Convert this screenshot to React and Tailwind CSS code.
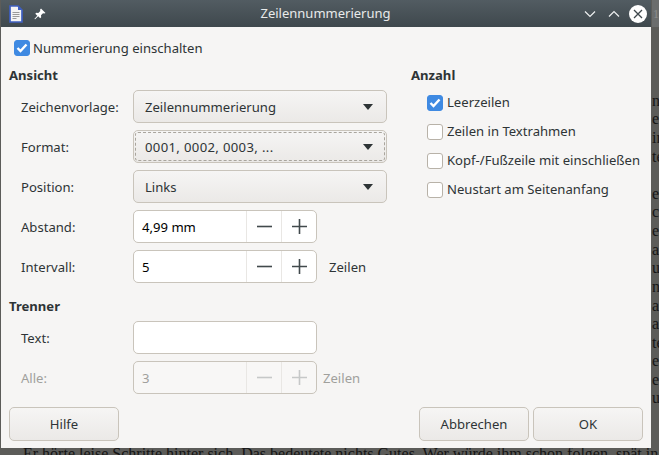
import React from 'react';

const FONT = "font-['Noto_Sans',sans-serif]";

const DOC_LINES = [
    ['n', 92], ['et', 110], ['in', 129], ['te', 148], ['er', 185], ['ck', 203], ['ei', 222], ['ag', 241],
    ['ue', 259], ['nr', 278], ['ag', 297], ['a', 315], ['te', 334], ['e', 352], ['e', 371], ['u', 389],
];

const Arrow = () => (
    <svg width="10" height="6" viewBox="0 0 10 6"><path d="M0 0h10L5 6z" fill="#2e3436" /></svg>
);

const Check = ({ checked }) => (
    <span className={`w-4 h-4 rounded-[3px] border flex items-center justify-center shrink-0 ${checked ? 'bg-[#3f8ae2] border-[#3f8ae2]' : 'bg-white border-[#b8b2a8]'}`}>
        {checked && (
            <svg width="12" height="10" viewBox="0 0 12 10"><path d="M1.5 5l3 3 6-6.5" fill="none" stroke="#fff" strokeWidth="2.4" /></svg>
        )}
    </span>
);

const CheckRow = ({ label, checked }) => (
    <label className="flex items-center gap-1 h-[29px] whitespace-nowrap">
        <Check checked={checked} />
        <span>{label}</span>
    </label>
);

const Combo = ({ value, focused }) => (
    <div className={`w-[254px] h-[33px] rounded-[5px] border border-[#c9c4bb] bg-gradient-to-b from-[#f6f5f4] to-[#ebe9e7] ${focused ? 'p-[1px]' : 'p-[2px]'}`}>
        <div className={`h-full flex items-center justify-between rounded-[3px] border border-dashed ${focused ? 'pl-[9px] pr-[11px] border-[#a9a59d]' : 'pl-[8px] pr-[10px] border-transparent'}`}>
            <span className={`pt-[2px] ${focused ? 'tracking-[0.35px]' : ''}`}>{value}</span>
            <Arrow />
        </div>
    </div>
);

const Spin = ({ value, disabled }) => (
    <div className={`w-[184px] h-[33px] rounded-[5px] border border-[#c9c4bb] flex items-center ${disabled ? 'bg-[#f8f7f6] text-[#a0a09c]' : 'bg-white text-black'}`}>
        <span className="flex-1 pl-2 pt-[2px]">{value}</span>
        {['M0 7.5h15', 'M0 7.5h15M7.5 0v15'].map(d => (
            <span key={d} className="w-[35px] h-full border-l border-[#e9e7e4] flex items-center justify-center">
                <svg width="15" height="15" viewBox="0 0 15 15"><path d={d} stroke={disabled ? '#c6c8c8' : '#41494c'} strokeWidth="1.6" fill="none" /></svg>
            </span>
        ))}
    </div>
);

const Row = ({ label, disabled, children }) => (
    <div className="flex items-center h-[33px] mb-[7px] last:mb-0">
        <span className={`w-[124px] pl-3 pt-[2px] ${disabled ? 'text-[#a0a09c]' : ''}`}>{label}</span>
        {children}
    </div>
);

const Button = ({ label }) => (
    <button className="w-[110px] h-[34px] pt-[2px] rounded-[5px] border border-[#c9c4bb] bg-gradient-to-b from-[#f6f5f4] to-[#ebe9e7] text-[#2e3436]">
        {label}
    </button>
);

export default function App() {
    return (
        <div className="relative w-[659px] h-[455px] overflow-hidden bg-[#5c5c59]">
            {/* document behind the dialog */}
            <div className="absolute left-[652px] top-0 w-[7px] h-[27px] bg-[#6b6d6d] overflow-hidden">
                <span className="ml-[1px] font-['Liberation_Serif',serif] text-[12px] leading-[27px] text-[#8b8d8d]">1</span>
            </div>
            {DOC_LINES.map(([t, y], i) => (
                <span key={i} className="absolute left-[652px] font-['Liberation_Serif',serif] text-[16px] leading-[18px] text-[#151515]" style={{ top: y }}>{t}</span>
            ))}
            <p className="absolute left-[23px] top-[445px] whitespace-nowrap font-['Liberation_Serif',serif] text-[16px] leading-[18px] text-[#151515]">
                Er hörte leise Schritte hinter sich. Das bedeutete nichts Gutes. Wer würde ihm schon folgen, spät in
            </p>

            {/* dialog */}
            <div className={`absolute left-[1px] top-0 w-[650px] h-[448px] bg-[#f6f5f4] text-[13.1px] text-[#2e3436] ${FONT}`}>
                <div className="h-[27px] bg-gradient-to-b from-[#525c62] to-[#3f484d] flex items-center pl-2 pr-[4px] text-[#e8eaea]">
                    <svg width="14" height="18" viewBox="0 0 14 18" className="shrink-0">
                        <path d="M1 1h8l4 4v12H1z" fill="#f4f4f4" stroke="#3f5fc0" strokeWidth="1.7" />
                        <path d="M9 1v4h4z" fill="#3f5fc0" />
                        <path d="M3.5 7.5h7M3.5 9.5h7M3.5 11.5h7M3.5 13.5h4" stroke="#9a9a9a" />
                    </svg>
                    <svg width="12" height="12" viewBox="0 0 12 12" className="ml-[11px] shrink-0">
                        <path d="M7 0.5l4.5 4.5-1.2.6-1.3-.4-2 2 .2 2-1 1-2-2-3 3-.9-.2 3-3.2-2-2 1-1 2 .2 2-2-.3-1.3z" fill="#fff" />
                    </svg>
                    <span className="flex-1 text-center text-[13px] pl-[21px]">Zeilennummerierung</span>
                    <svg width="12" height="8" viewBox="0 0 12 8" className="mr-[12px]"><path d="M1 1.5l5 5 5-5" fill="none" stroke="#eef0f0" strokeWidth="1.2" /></svg>
                    <svg width="12" height="8" viewBox="0 0 12 8" className="mr-[9px]"><path d="M1 6.5l5-5 5 5" fill="none" stroke="#eef0f0" strokeWidth="1.2" /></svg>
                    <span className="w-[18px] h-[18px] rounded-full bg-white flex items-center justify-center">
                        <svg width="10" height="10" viewBox="0 0 10 10"><path d="M1 1l8 8M9 1L1 9" stroke="#3f484d" strokeWidth="1.3" /></svg>
                    </span>
                </div>

                <div className="pl-2 pr-2">
                    <div className="pl-[5px] pt-[13px] pb-[10px]">
                        <label className="flex items-center gap-[3px] h-[16px]"><Check checked /><span className="mt-[1px]">Nummerierung einschalten</span></label>
                    </div>
                    <div className="flex">
                        <div className="w-[402px] shrink-0">
                            <h2 className="font-bold leading-[18px] mb-[6px]">Ansicht</h2>
                            <Row label="Zeichenvorlage:"><Combo value="Zeilennummerierung" /></Row>
                            <Row label="Format:"><Combo value="0001, 0002, 0003, ..." focused /></Row>
                            <Row label="Position:"><Combo value="Links" /></Row>
                            <Row label="Abstand:"><Spin value="4,99 mm" /></Row>
                            <Row label="Intervall:"><Spin value="5" /><span className="ml-3 pt-[2px]">Zeilen</span></Row>
                            <h2 className="font-bold leading-[18px] mt-[14px] mb-[6px]">Trenner</h2>
                            <Row label="Text:"><div className="w-[184px] h-[33px] rounded-[5px] border border-[#c9c4bb] bg-white" /></Row>
                            <Row label="Alle:" disabled><Spin value="3" disabled /><span className="ml-[6px] pt-[2px] text-[#a0a09c]">Zeilen</span></Row>
                        </div>
                        <div>
                            <h2 className="font-bold leading-[18px] mb-[4px]">Anzahl</h2>
                            <div className="pl-4">
                                <CheckRow label="Leerzeilen" checked />
                                <CheckRow label="Zeilen in Textrahmen" />
                                <CheckRow label="Kopf-/Fußzeile mit einschließen" />
                                <CheckRow label="Neustart am Seitenanfang" />
                            </div>
                        </div>
                    </div>
                    <div className="flex justify-between items-center mt-[13px]">
                        <Button label="Hilfe" />
                        <div className="flex gap-1"><Button label="Abbrechen" /><Button label="OK" /></div>
                    </div>
                </div>
            </div>
        </div>
    );
}
